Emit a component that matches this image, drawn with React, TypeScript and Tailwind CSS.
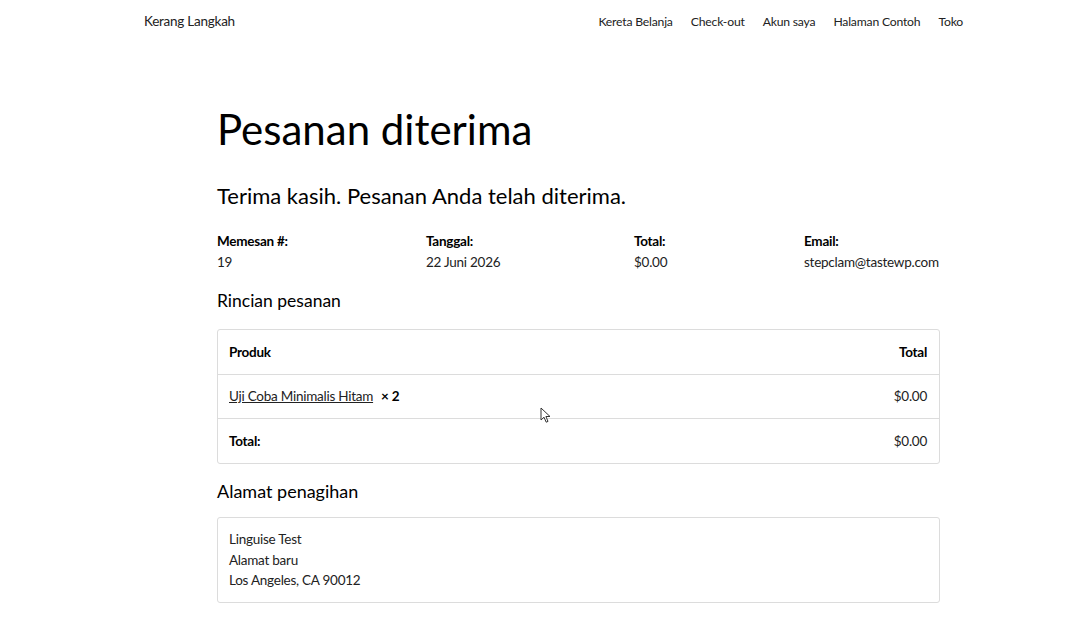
const navLinks = ['Kereta Belanja', 'Check-out', 'Akun saya', 'Halaman Contoh', 'Toko'];

const overview = [
  { label: 'Memesan #:', value: '19', width: 'w-[209px]' },
  { label: 'Tanggal:', value: '22 Juni 2026', width: 'w-[208px]' },
  { label: 'Total:', value: '$0.00', width: 'w-[170px]' },
  { label: 'Email:', value: 'stepclam@tastewp.com', width: 'w-[136px]' },
];

function Cursor() {
  return (
    <svg width="12" height="17" viewBox="0 0 12 17">
      <path
        d="M1 1 L1 13 L4 10.2 L6.2 15.2 L8 14.4 L5.9 9.5 L10 9.5 Z"
        fill="white"
        stroke="#333"
        strokeWidth="1"
        strokeLinejoin="round"
      />
    </svg>
  );
}

export default function App() {
  return (
    <div className="relative min-h-[620px] bg-white text-[#222] font-['Lato','Noto_Sans',sans-serif]">
      {/* Header */}
      <header className="flex items-center justify-between h-[42px] pl-[144px] pr-[116px]">
        <div className="text-[13.5px] tracking-[-0.25px] text-[#222]">Kerang Langkah</div>
        <nav className="flex gap-[18px] pt-[2px] text-[12.2px] tracking-[-0.2px]">
          {navLinks.map(link => (
            <a key={link} className="text-[#222]">{link}</a>
          ))}
        </nav>
      </header>

      <main className="w-[723px] ml-[217px] pt-[58px]">
        <h1 className="text-[42px] leading-[58px] text-black">Pesanan diterima</h1>
        <p className="mt-[23px] text-[22px] leading-[30px] text-black">
          Terima kasih. Pesanan Anda telah diterima.
        </p>

        <div className="text-[13.5px] tracking-[-0.25px]">
          {/* Overview */}
          <ul className="flex mt-[20px] leading-[21px]">
            {overview.map(item => (
              <li key={item.label} className={`shrink-0 ${item.width}`}>
                <div className="font-bold text-black">{item.label}</div>
                <div className="text-[#222] whitespace-nowrap">{item.value}</div>
              </li>
            ))}
          </ul>

          <h2 className="mt-[16px] text-[17.5px] leading-[24px] tracking-normal text-black">Rincian pesanan</h2>

          <table className="mt-[16px] w-full border-separate border-spacing-0 border border-[#dcdcdc] rounded-[3px]">
            <thead>
              <tr className="h-[44px] text-black">
                <th className="pl-[11px] pr-3 text-left font-bold">Produk</th>
                <th className="px-3 text-right font-bold">Total</th>
              </tr>
            </thead>
            <tbody>
              <tr className="h-[44px]">
                <td className="pl-[11px] pr-3 border-t border-[#dcdcdc]">
                  <a className="underline text-[#222]">Uji Coba Minimalis Hitam</a>
                  <strong className="ml-2 text-black">× 2</strong>
                </td>
                <td className="px-3 border-t border-[#dcdcdc] text-right">$0.00</td>
              </tr>
            </tbody>
            <tfoot>
              <tr className="h-[45px]">
                <th className="pl-[11px] pr-3 border-t border-[#dcdcdc] text-left font-bold text-black">Total:</th>
                <td className="px-3 border-t border-[#dcdcdc] text-right">$0.00</td>
              </tr>
            </tfoot>
          </table>

          <h2 className="mt-[15px] text-[18px] leading-[24px] tracking-normal text-black">Alamat penagihan</h2>

          <address className="mt-[14px] not-italic border border-[#dcdcdc] rounded-[3px] pl-[11px] pr-3 py-[11px] leading-[20.5px]">
            Linguise Test
            <br />
            Alamat baru
            <br />
            Los Angeles, CA 90012
          </address>
        </div>
      </main>

      {/* Mouse cursor */}
      <div className="absolute left-[540px] top-[407px]">
        <Cursor />
      </div>
    </div>
  );
}
